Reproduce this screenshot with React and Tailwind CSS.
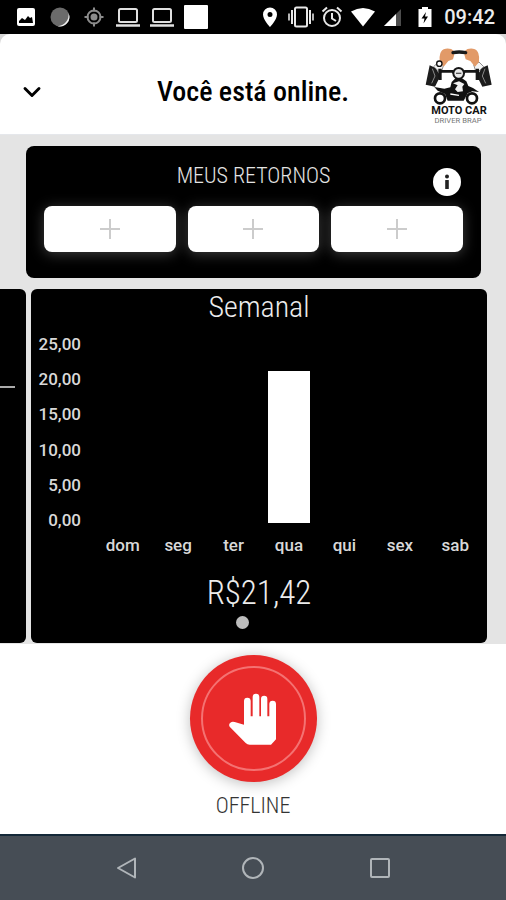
import { ChevronDown } from "lucide-react";

const days = [
  { label: "dom", value: 0 },
  { label: "seg", value: 0 },
  { label: "ter", value: 0 },
  { label: "qua", value: 21.42 },
  { label: "qui", value: 0 },
  { label: "sex", value: 0 },
  { label: "sab", value: 0 },
];
const ticks = ["25,00", "20,00", "15,00", "10,00", "5,00", "0,00"];
const MAX = 25;

function StatusBar() {
  return (
    <div className="h-[34px] bg-black text-white flex items-center justify-between pl-[14px] pr-[11px]">
      <div className="flex items-center gap-[10px]">
        <svg className="w-6 h-6" viewBox="0 0 24 24">
          <rect x="3" y="3" width="18" height="18" rx="2" fill="#fff" />
          <path d="M5 18v-2l3-3 3 2 3-4 2 2 2-1 1 6z" fill="#000" />
        </svg>
        <svg className="w-6 h-6" viewBox="0 0 24 24">
          <circle cx="12" cy="12" r="9.5" fill="#6b6b6b" />
          <path d="M20.500 8a9.500 9.500 0 0 1-11 13.200A11.500 11.500 0 0 0 20.500 8z" fill="#f2f2f2" />
        </svg>
        <svg className="w-6 h-6" viewBox="0 0 24 24" fill="none" stroke="#8c8c8c" strokeWidth="2">
          <circle cx="12" cy="12" r="6.500" />
          <circle cx="12" cy="12" r="3.500" fill="#8c8c8c" stroke="none" />
          <path d="M12 2.500v4M12 17.500v4M2.500 12h4M17.500 12h4" />
        </svg>
        <Laptop />
        <Laptop />
        <svg className="w-6 h-6" viewBox="0 0 24 24"><rect width="24" height="24" rx="1" fill="#fff" /></svg>
      </div>
      <div className="flex items-center gap-[7px]">
        <svg className="w-6 h-6" viewBox="0 0 24 24" fill="#fff">
          <path fillRule="evenodd" d="M12 2.500a7 7 0 0 0-7 7c0 5.200 7 12.500 7 12.500s7-7.300 7-12.500a7 7 0 0 0-7-7zm0 9.500a2.500 2.500 0 1 1 0-5 2.500 2.500 0 0 1 0 5z" />
        </svg>
        <svg className="w-6 h-6 overflow-visible" viewBox="0 0 24 24" fill="none" stroke="#e8e8e8" strokeWidth="2">
          <rect x="6" y="2.500" width="12" height="19" rx="1.500" />
          <path d="M3 5v14M21 5v14" />
          <path d="M0 8.500v7M24 8.500v7" stroke="#b5b5b5" />
        </svg>
        <svg className="w-6 h-6" viewBox="0 0 24 24" fill="none" stroke="#e8e8e8" strokeWidth="2">
          <circle cx="12" cy="13" r="8" />
          <path d="M12 8v5.500l4 2.500M2.500 6.500l4.500-4M21.500 6.500l-4.500-4" />
        </svg>
        <svg className="w-6 h-6" viewBox="0 0 24 24" fill="#fff"><path d="M0 6.500Q12-.5 24 6.500L12 21.500z" /></svg>
        <svg className="w-6 h-6" viewBox="0 0 24 24">
          <path d="M2 21L19 4v17z" fill="#4d4d4d" />
          <path d="M2 21L14 9v12z" fill="#fff" />
        </svg>
        <svg className="w-6 h-6" viewBox="0 0 24 24">
          <path d="M9 2h6v2h3.500v18h-13V4H9z" fill="#fff" />
          <path d="M13 7l-4.500 6.500h3l-1 5 4.500-7h-3z" fill="#000" />
        </svg>
        <span className="text-[20px] leading-6 font-medium text-[#ececec]">09:42</span>
      </div>
    </div>
  );
}

function Laptop() {
  return (
    <svg className="w-6 h-6" viewBox="0 0 24 24" fill="none" stroke="#e0e0e0" strokeWidth="2">
      <rect x="3" y="4" width="18" height="13" rx="1.500" />
      <path d="M0 20.500h24" strokeWidth="2.500" />
    </svg>
  );
}

function Logo() {
  return (
    <svg className="w-[70px] h-20 mt-1 mr-3 justify-self-end" viewBox="55 30 210 240" role="img" aria-label="Moto Car">
      {/* sleeves and cuffs */}
      <path d="M72 88l18 8 14 24-16 32-28-6zM246 88l-18 8-14 24 16 32 28-6z" fill="#1c1c1c" />
      <path d="M80 98l8 22-10 22M238 98l-8 22 10 22" stroke="#888" strokeWidth="3" fill="none" />
      <path d="M84 92l14-14 16 8-8 26zM234 92l-14-14-16 8 8 26z" fill="#f4f4f4" stroke="#555" strokeWidth="2" />
      {/* hands */}
      <path d="M102 78q-2-14 2-26 3-12 16-14 16-2 25 7 3 14-3 25l-14 5q-8 10-14 17zM220 78q2-14-2-26-3-12-16-14-16-2-25 7-3 14 3 25l14 5q8 10 14 17z" fill="#e29a68" />
      <path d="M142 50q18-4 38 0" stroke="#1a1a1a" strokeWidth="10" strokeLinecap="round" fill="none" />
      <circle cx="101" cy="83" r="8" fill="#fff" stroke="#111" strokeWidth="4" />
      {/* handlebar */}
      <path d="M103 98v34M215 98v34" stroke="#161616" strokeWidth="10" />
      <path d="M100 106h40l8 8M218 106h-40l-8 8" stroke="#161616" strokeWidth="8" fill="none" />
      <circle cx="159" cy="112" r="16" fill="#e8e8e8" stroke="#161616" strokeWidth="6" />
      <path d="M151 112h16" stroke="#555" strokeWidth="4" />
      {/* motorcycle */}
      <circle cx="103" cy="187" r="15" fill="#fff" stroke="#111" strokeWidth="8" />
      <circle cx="199" cy="187" r="15" fill="#fff" stroke="#111" strokeWidth="8" />
      <path d="M86 153l30 5 18-4 4-16 12-12h18l14 10 6 14 14 6 18 12-20-2-14 6-12 22h-48l-8-20-22-10z" fill="#111" />
      <path d="M142 142l14 6-8 12 8 8 16-2-2-14 6-8-16-8z" fill="#f2f2f2" />
      <path d="M134 174l26 4" stroke="#fff" strokeWidth="4" />
      <text x="160" y="234" textAnchor="middle" fontSize="33" fontWeight="700" fill="#111">MOTO CAR</text>
      <text x="157" y="260" textAnchor="middle" fontSize="23" fill="#777">DRIVER BRAP</text>
    </svg>
  );
}

function Header() {
  return (
    <div className="bg-[#d8d8d8]">
      <header className="h-[101px] bg-white rounded-t-[10px] grid grid-cols-[90px_1fr_90px] items-center border-b border-gray-200">
        <button aria-label="Recolher" className="ml-5 mt-4 w-6 h-6 flex items-center justify-center">
          <ChevronDown className="shrink-0" size={28} strokeWidth={2.500} />
        </button>
        <h1 className="mt-4 text-center text-[28px] leading-9 font-medium text-black font-['Roboto_Condensed',sans-serif]">Você está online.</h1>
        <Logo />
      </header>
    </div>
  );
}

function Retornos() {
  return (
    <section className="relative ml-[26px] mr-[25px] h-[132px] rounded-lg bg-black px-[18px] pt-[18px]">
      <h2 className="text-center text-[22px] leading-6 font-light text-[#e4e4e4] font-['Roboto_Condensed',sans-serif]">MEUS RETORNOS</h2>
      <button aria-label="Informações" className="absolute right-5 top-[22px] w-7 h-7 rounded-full bg-white">
        <svg className="w-7 h-7" viewBox="0 0 28 28" fill="#222">
          <circle cx="14" cy="8.500" r="2" />
          <rect x="12.200" y="12" width="3.600" height="9" rx=".5" />
        </svg>
      </button>
      <div className="mt-[18px] grid grid-cols-3 gap-3">
        {[1, 2, 3].map((n) => (
          <button key={n} aria-label={`Adicionar retorno ${n}`} className="h-[46px] rounded-lg bg-white flex items-center justify-center shadow-[0_2px_14px_rgba(255,255,255,0.25)]">
            <svg className="w-5 h-5" viewBox="0 0 20 20" stroke="#ccc" strokeWidth="2"><path d="M10 0v20M0 10h20" /></svg>
          </button>
        ))}
      </div>
    </section>
  );
}

function Semanal() {
  return (
    <section className="flex-1 h-[354px] rounded-md bg-black text-[#ececec] flex flex-col">
      <h2 className="text-center text-[30px] leading-9 font-light font-['Roboto_Condensed',sans-serif]">Semanal</h2>
      <div className="flex mt-[9px] pr-1 text-[17px] leading-5 font-medium text-[#d8d8d8]">
        <div className="w-[50px] h-[196px] flex flex-col justify-between text-right">
          {ticks.map((t) => <span key={t}>{t}</span>)}
        </div>
        <div className="flex-1 ml-[14px] pt-[11px]">
          <div className="h-[178px] grid grid-cols-7">
            {days.map((d) => (
              <div key={d.label} className="flex items-end justify-center">
                <div className="w-3/4 bg-white" style={{ height: `${(d.value / MAX) * 100}%` }} />
              </div>
            ))}
          </div>
          <div className="mt-3 grid grid-cols-7 text-center">
            {days.map((d) => <span key={d.label}>{d.label}</span>)}
          </div>
        </div>
      </div>
      <p className="mt-[18px] text-center text-[33px] leading-10 font-light font-['Roboto_Condensed',sans-serif]">R$21,42</p>
      <div className="mt-[3px] flex justify-center gap-5">
        <span className="w-[13px] h-[13px] rounded-full bg-[#bdbdbd]" />
        <span className="w-[13px] h-[13px] rounded-full bg-black" />
      </div>
    </section>
  );
}

function OfflineButton() {
  return (
    <div className="h-[190px] bg-white pt-[11px] flex justify-center">
      <button className="flex flex-col items-center">
        <span className="w-[127px] h-[127px] rounded-full bg-[#e82a2a] p-[11px] shadow-[0_2px_14px_rgba(0,0,0,0.25)]">
          <span className="w-full h-full rounded-full border-2 border-[#f47272] flex items-center justify-center">
            <svg className="w-12 h-[52px]" viewBox="0 0 144 156" fill="#fff">
              <path d="M45 95V24a9.500 9.500 0 0 1 20 0v46h6V12a10 10 0 0 1 20 0v58h5V18a9.500 9.500 0 0 1 19 0v52h6V33a9.500 9.500 0 0 1 20 0v106l-15 16H62q-7 0-12-5L2 101q-4-7 2-12 6-5 13-2z" />
            </svg>
          </span>
        </span>
        <span className="mt-3 text-[22px] leading-6 font-light text-[#333] font-['Roboto_Condensed',sans-serif]">OFFLINE</span>
      </button>
    </div>
  );
}

function NavBar() {
  return (
    <nav className="h-[66px] bg-[#464d55] border-t-2 border-[#142838] px-[12.5%] grid grid-cols-3">
      <button aria-label="Voltar" className="flex items-center justify-center">
        <svg className="w-6 h-6" viewBox="0 0 24 24" fill="none" stroke="#b0b5b9" strokeWidth="2" strokeLinejoin="round"><path d="M20 2.500v19L3 12z" /></svg>
      </button>
      <button aria-label="Início" className="flex items-center justify-center">
        <svg className="w-6 h-6" viewBox="0 0 24 24" fill="none" stroke="#b0b5b9" strokeWidth="2"><circle cx="12" cy="12" r="10" /></svg>
      </button>
      <button aria-label="Recentes" className="flex items-center justify-center">
        <svg className="w-6 h-6" viewBox="0 0 24 24" fill="none" stroke="#b0b5b9" strokeWidth="2"><rect x="3" y="3" width="18" height="18" rx="1" /></svg>
      </button>
    </nav>
  );
}

export default function App() {
  return (
    <div className="min-h-screen flex flex-col bg-[#e4e4e4] font-[Roboto,sans-serif]">
      <StatusBar />
      <Header />
      <main className="flex-1 pt-[11px]">
        <Retornos />
        <div className="mt-[11px] flex gap-[5px] pr-[19px] overflow-hidden">
          <div className="w-[26px] h-[354px] rounded-r-md bg-black pt-[97px]">
            <div className="w-[15px] h-[2px] bg-[#aaa]" />
          </div>
          <Semanal />
        </div>
      </main>
      <OfflineButton />
      <NavBar />
    </div>
  );
}
